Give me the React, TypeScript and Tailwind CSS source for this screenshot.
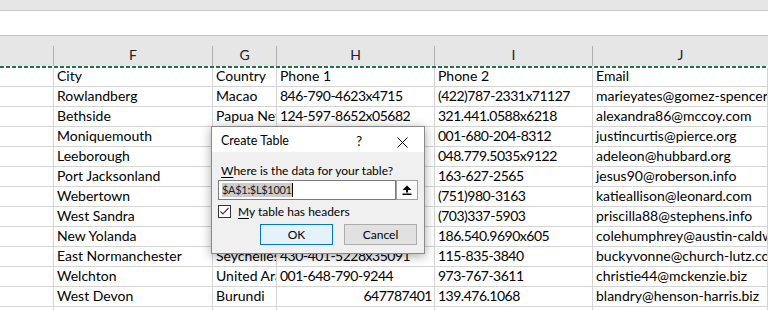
type Row = [string, string, string, string, string];

const rows: Row[] = [
  ["City", "Country", "Phone 1", "Phone 2", "Email"],
  ["Rowlandberg", "Macao", "846-790-4623x4715", "(422)787-2331x71127", "marieyates@gomez-spencer.com"],
  ["Bethside", "Papua New Guinea", "124-597-8652x05682", "321.441.0588x6218", "alexandra86@mccoy.com"],
  ["Moniquemouth", "Monaco", "(335)987-3085", "001-680-204-8312", "justincurtis@pierce.org"],
  ["Leeborough", "Niue", "(230)880-7286", "048.779.5035x9122", "adeleon@hubbard.org"],
  ["Port Jacksonland", "Norway", "(721)620-4371", "163-627-2565", "jesus90@roberson.info"],
  ["Webertown", "Benin", "(626)478-1812", "(751)980-3163", "katieallison@leonard.com"],
  ["West Sandra", "Aruba", "(309)233-5480", "(703)337-5903", "priscilla88@stephens.info"],
  ["New Yolanda", "Chad", "(414)716-3010", "186.540.9690x605", "colehumphrey@austin-caldwell.com"],
  ["East Normanchester", "Seychelles", "430-401-5228x35091", "115-835-3840", "buckyvonne@church-lutz.com"],
  ["Welchton", "United Arab Emirates", "001-648-790-9244", "973-767-3611", "christie44@mckenzie.biz"],
  ["West Devon", "Burundi", "647787401", "139.476.1068", "blandry@henson-harris.biz"],
  ["", "", "", "", ""],
];

// column widths incl. the right gridline
const widths = ["w-[54px]", "w-[159px]", "w-[64px]", "w-[158px]", "w-[158px]", "flex-1"];
const letters = ["", "F", "G", "H", "I", "J"];

function Cell({ w, text, right, tight }: { w: string; text: string; right?: boolean; tight?: boolean }) {
  return (
    <div
      className={`${w} shrink-0 min-w-0 border-r border-[#d4d4d4] overflow-hidden whitespace-nowrap flex items-end pb-[1px] ${
        right ? "justify-end pr-[2px]" : "pl-[3px]"
      }`}
    >
      <span className={`leading-[18px] ${tight ? "tracking-[-0.5px]" : ""}`}>{text}</span>
    </div>
  );
}

function Dialog() {
  return (
    <div className="absolute left-[211px] top-[126px] w-[214px] h-[128px] border border-[#8a8a8a] bg-[#f0f0f0] shadow-[0_2px_10px_rgba(0,0,0,0.35)] flex flex-col text-[12px] text-black">
      <div className="h-[25px] bg-white flex items-start pt-[6px] pl-[9px]">
        <span className="leading-[16px] text-[12.5px]">Create Table</span>
        <span className="ml-auto mr-[35px] leading-[16px] text-[13px]">?</span>
        <svg width="11" height="11" viewBox="0 0 11 11" className="mt-[4px] mr-[16px]">
          <path d="M0.5 0.5 L10.5 10.5 M10.5 0.5 L0.5 10.5" stroke="#000" strokeWidth="1" />
        </svg>
      </div>
      <div className="flex flex-col pt-[11px] pl-[6px]">
        <div className="leading-[16px] pl-[3px]">
          <span className="underline underline-offset-2">W</span>here is the data for your table?
        </div>
        <div className="flex mt-[1px]">
          <div className="w-[178px] h-[20px] border border-[#7a7a7a] bg-white flex items-center pl-[3px]">
            <span className="bg-[#cccccc] leading-[14px] text-[11px] tracking-[-0.3px] text-[#1a1a1a]">$A$1:$L$1001</span>
            <span className="w-px h-[14px] bg-black" />
          </div>
          <div className="w-[22px] h-[20px] border border-[#a0a0a0] bg-[#fbfbfb] flex items-center justify-center">
            <svg width="10" height="10" viewBox="0 0 10 10">
              <path d="M5 0.5 L9.5 5 L6 5 L6 7.5 L4 7.5 L4 5 L0.5 5 Z" fill="#000" />
              <rect x="0.5" y="8.5" width="9" height="1.5" fill="#000" />
            </svg>
          </div>
        </div>
        <div className="flex items-center h-[13px] mt-[5px]">
          <div className="w-[13px] h-[13px] border border-[#333] bg-white flex items-center justify-center">
            <svg width="11" height="11" viewBox="0 0 11 11">
              <path d="M1.5 5.5 L4 8 L9.5 2" stroke="#404040" strokeWidth="1.2" fill="none" />
            </svg>
          </div>
          <span className="ml-[7px] leading-[16px]">
            <span className="underline underline-offset-2">M</span>y table has headers
          </span>
        </div>
        <div className="flex justify-end gap-[11px] pr-[7px] mt-[6px]">
          <div className="w-[73px] h-[21px] border border-[#0078d7] bg-[#e5f1fb] flex items-center justify-center leading-[16px]">
            OK
          </div>
          <div className="w-[73px] h-[21px] border border-[#adadad] bg-[#e1e1e1] flex items-center justify-center leading-[16px]">
            Cancel
          </div>
        </div>
      </div>
    </div>
  );
}

export default function App() {
  return (
    <div className="relative w-[768px] h-[310px] overflow-hidden bg-white font-['Lato',sans-serif] text-[14px] text-black">
      <div className="h-[10px] bg-[#e6e6e6]" />
      <div className="h-[26px] border-y border-[#c6c6c6] bg-white" />
      <div className="h-[30px] bg-[#e6e6e6] flex">
        {widths.map((w, i) => (
          <div key={i} className={`${w} shrink-0 flex items-end`}>
            <span className="flex-1 text-center leading-[18px] pb-[2px] text-[#222]">{letters[i]}</span>
            {i < 5 && <span className="w-px h-[20px] bg-[#b0b0b0]" />}
          </div>
        ))}
      </div>
      <svg width="768" height="2" className="block">
        <line x1="0" y1="1" x2="768" y2="1" stroke="#217346" strokeWidth="2" strokeDasharray="4 2" />
      </svg>
      {rows.map((r, ri) => (
        <div key={ri} className={`flex border-b border-[#d4d4d4] ${ri === 0 ? "h-[19px]" : "h-[20px]"}`}>
          <Cell w={widths[0]} text="" />
          <Cell w={widths[1]} text={r[0]} />
          <Cell w={widths[2]} text={r[1]} />
          <Cell w={widths[3]} text={r[2]} right={/^\d+$/.test(r[2])} tight={ri > 0} />
          <Cell w={widths[4]} text={r[3]} tight={ri > 0} />
          <Cell w={widths[5]} text={r[4]} />
        </div>
      ))}
      <Dialog />
    </div>
  );
}
